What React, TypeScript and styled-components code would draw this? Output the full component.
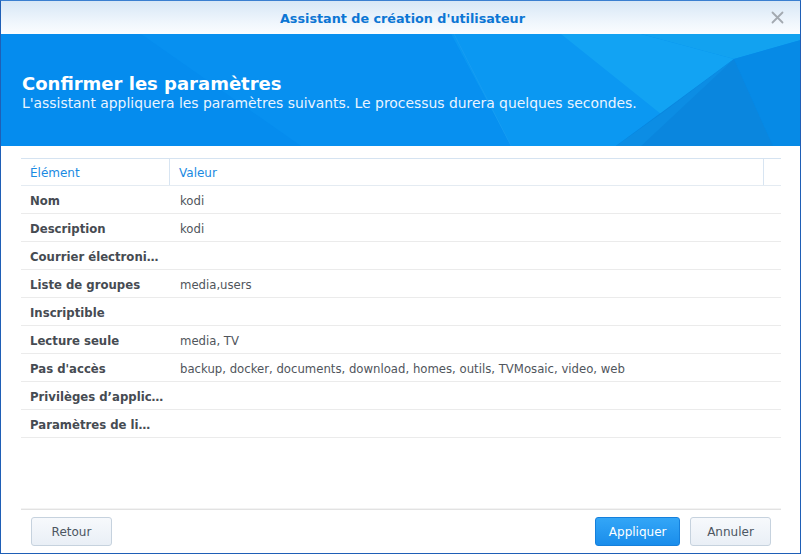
import React from "react";
import styled, { createGlobalStyle } from "styled-components";

const Global = createGlobalStyle`
  html, body { margin: 0; padding: 0; background: #ffffff; }
  body { font-family: "DejaVu Sans", Verdana, sans-serif; }
  * { box-sizing: border-box; }
`;

const Window = styled.div`
  width: 801px;
  height: 554px;
  border: 1px solid #1f5fb6;
  border-top-color: #3a7fd0;
  display: flex;
  flex-direction: column;
  background: #ffffff;
  overflow: hidden;
`;

const TitleBar = styled.div`
  height: 33px;
  flex: none;
  display: flex;
  align-items: center;
  justify-content: center;
  position: relative;
  background: linear-gradient(to bottom, #d7e7f6 0%, #eef5fc 60%, #fbfdff 100%);
`;

const Title = styled.div`
  font-size: 12.75px;
  font-weight: bold;
  color: #0c76d4;
  padding-top: 1px;
  padding-left: 4px;
`;

const CloseBtn = styled.div`
  position: absolute;
  right: 16px;
  top: 10px;
  width: 13px;
  height: 13px;
  display: flex;
`;

const Banner = styled.div`
  height: 112px;
  flex: none;
  position: relative;
  background: #058cee;
  display: flex;
  flex-direction: column;
  justify-content: center;
  padding: 4px 0 0 21px;
  color: #ffffff;
  overflow: hidden;
`;

const BannerArt = styled.svg`
  position: absolute;
  left: 0;
  top: 0;
  width: 800px;
  height: 112px;
`;

const BannerTitle = styled.div`
  position: relative;
  font-size: 18px;
  font-weight: bold;
  line-height: 22px;
`;

const BannerSub = styled.div`
  position: relative;
  font-size: 13.9px;
  line-height: 17px;
  color: #eaf4ff;
`;

const Content = styled.div`
  flex: 1;
  padding: 12px 19px 0 20px;
  display: flex;
  flex-direction: column;
`;

const Table = styled.div`
  display: flex;
  flex-direction: column;
`;

const HeadRow = styled.div`
  display: grid;
  grid-template-columns: 149px 594px 17px;
  height: 28px;
  border-top: 1px solid #d5e3f1;
  border-bottom: 1px solid #e4ebf2;
`;

const HeadCell = styled.div<{ $divider?: boolean }>`
  display: flex;
  align-items: center;
  padding: 2px 0 0 9px;
  font-size: 12px;
  color: #1a8ae2;
  border-right: ${(p) => (p.$divider ? "1px solid #d8e5f2" : "none")};
`;

const Row = styled.div`
  display: grid;
  grid-template-columns: 149px 1fr;
  height: 28px;
  border-bottom: 1px solid #ebebeb;
`;

const Label = styled.div`
  display: flex;
  align-items: center;
  padding: 2px 0 0 9px;
  font-size: 11.7px;
  font-weight: bold;
  color: #464b52;
  white-space: nowrap;
  overflow: hidden;
`;

const Value = styled.div`
  display: flex;
  align-items: center;
  padding: 2px 0 0 10px;
  font-size: 11.7px;
  color: #50555c;
  white-space: nowrap;
`;

const Footer = styled.div`
  margin: 0 19px 0 20px;
  border-top: 1px solid #e2e2e2;
  box-shadow: 0 -1px 0 #f3f3f3;
  padding: 7px 10px 7px 10px;
  display: flex;
  align-items: center;
  gap: 10px;
  flex: none;
`;

const Spacer = styled.div`
  flex: 1;
`;

const Button = styled.button<{ $primary?: boolean }>`
  height: 29px;
  min-width: 81px;
  padding: 0 12.5px;
  border-radius: 3px;
  font-family: "DejaVu Sans", Verdana, sans-serif;
  font-size: 12px;
  border: 1px solid ${(p) => (p.$primary ? "#1580dc" : "#c6d2de")};
  color: ${(p) => (p.$primary ? "#ffffff" : "#4c5662")};
  background: ${(p) =>
    p.$primary
      ? "linear-gradient(to bottom, #33a6f7 0%, #1a8deb 100%)"
      : "linear-gradient(to bottom, #f7f9fc 0%, #e9eff6 100%)"};
`;

const rows: [string, string][] = [
  ["Nom", "kodi"],
  ["Description", "kodi"],
  ["Courrier électroni…", ""],
  ["Liste de groupes", "media,users"],
  ["Inscriptible", ""],
  ["Lecture seule", "media, TV"],
  ["Pas d'accès", "backup, docker, documents, download, homes, outils, TVMosaic, video, web"],
  ["Privilèges d’applic…", ""],
  ["Paramètres de li…", ""],
];

export default function App() {
  return (
    <>
      <Global />
      <Window>
        <TitleBar>
          <Title>Assistant de création d'utilisateur</Title>
          <CloseBtn>
            <svg width="13" height="13" viewBox="0 0 13 13">
              <path d="M1.5 1.5 L11.5 11.5 M11.5 1.5 L1.5 11.5" stroke="#a3a9b0" strokeWidth="1.8" strokeLinecap="round" />
            </svg>
          </CloseBtn>
        </TitleBar>
        <Banner>
          <BannerArt viewBox="0 0 800 112" preserveAspectRatio="none">
            <polygon points="140,0 450,0 510,112 300,112" fill="#0790f0" />
            <polygon points="450,0 640,0 733,25 615,112 510,112" fill="#0b98f2" />
            <polygon points="560,0 640,0 733,25 660,80" fill="#16a8f3" opacity="0.7" />
            <polygon points="640,0 800,0 800,6 733,25" fill="#12a2f0" />
            <polygon points="733,25 800,6 800,112 772,112" fill="#068ae6" />
            <polygon points="733,25 772,112 615,112" fill="#0a86de" />
            <polygon points="660,80 733,25 640,112 615,112" fill="#0d93e8" opacity="0.6" />
            <line x1="453" y1="0" x2="510" y2="112" stroke="#2aa4f4" strokeWidth="0.6" opacity="0.6" />
          </BannerArt>
          <BannerTitle>Confirmer les paramètres</BannerTitle>
          <BannerSub>L'assistant appliquera les paramètres suivants. Le processus durera quelques secondes.</BannerSub>
        </Banner>
        <Content>
          <Table>
            <HeadRow>
              <HeadCell $divider>Élément</HeadCell>
              <HeadCell $divider>Valeur</HeadCell>
              <HeadCell />
            </HeadRow>
            {rows.map(([k, v]) => (
              <Row key={k}>
                <Label>{k}</Label>
                <Value>{v}</Value>
              </Row>
            ))}
          </Table>
        </Content>
        <Footer>
          <Button>Retour</Button>
          <Spacer />
          <Button $primary>Appliquer</Button>
          <Button>Annuler</Button>
        </Footer>
      </Window>
    </>
  );
}
